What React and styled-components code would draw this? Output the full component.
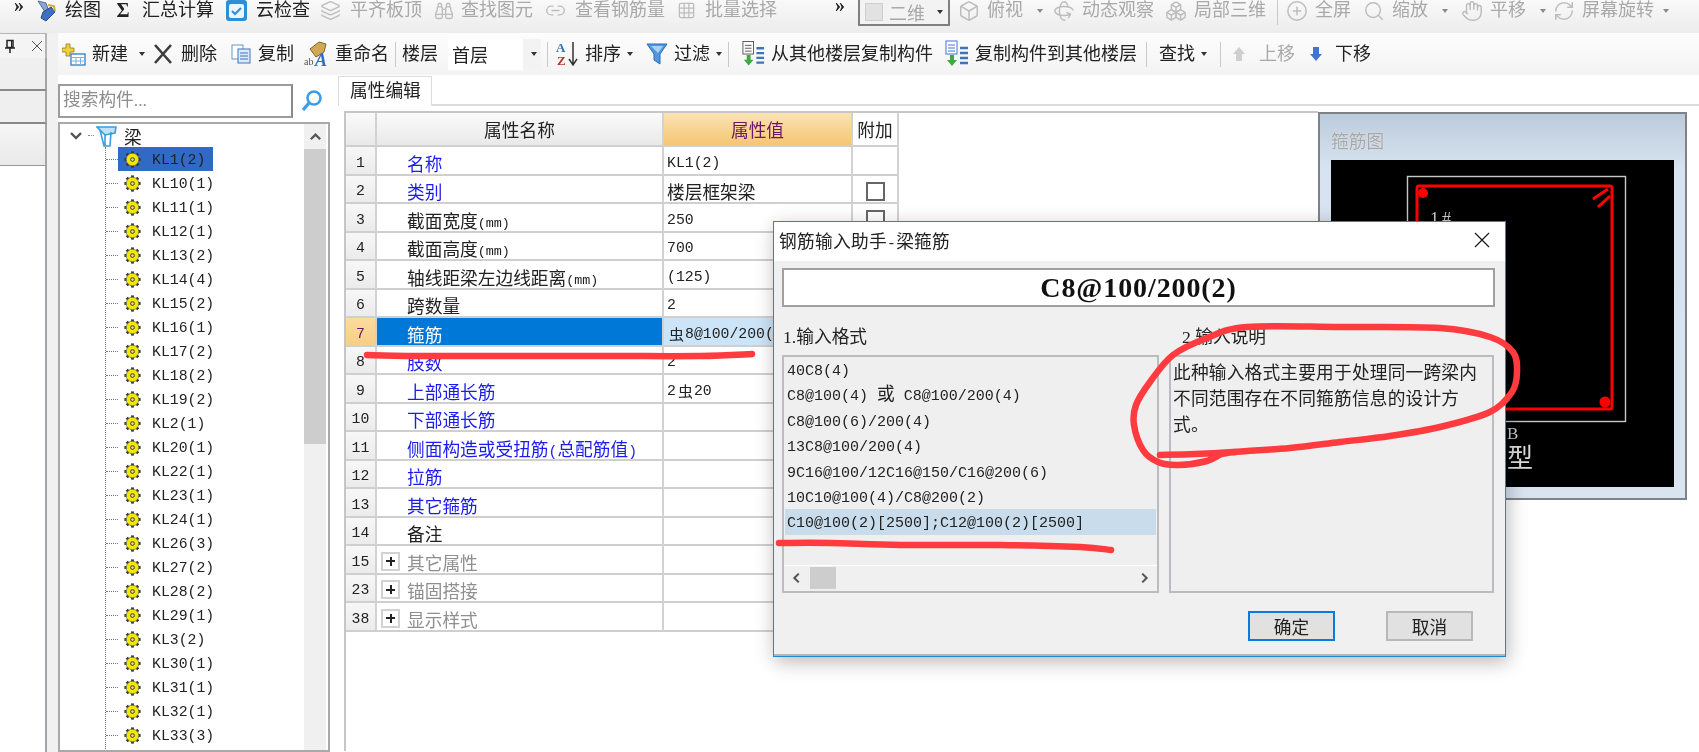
import React from 'react'
import styled, { createGlobalStyle } from 'styled-components'
import {
  Binoculars,
  Box,
  Boxes,
  CirclePlus,
  Grid3x3,
  Hand,
  Layers,
  Link2,
  RefreshCw,
  Rotate3d,
  Search
} from 'lucide-react'

const GlobalStyle = createGlobalStyle`
  html, body {
    margin: 0;
    padding: 0;
    background: #fff;
  }
  body {
    font-family: 'Liberation Serif', 'Noto Sans CJK SC', serif;
    font-size: 17.7px;
    color: #222;
  }
`

const Page = styled.div`
  position: relative;
  width: 1699px;
  height: 752px;
  overflow: hidden;
  display: flex;
  flex-direction: column;
  background: #fff;
  filter: blur(0.4px);
`

const Mono = styled.span`
  font-family: 'Liberation Mono', 'Noto Sans CJK SC', monospace;
  font-size: 14.8px;
`

const ListMono = styled(Mono)`
  font-size: 15px;
  white-space: pre;
`

/* ---------- toolbars ---------- */

const TopBar = styled.div`
  height: 33px;
  flex: none;
  display: flex;
  align-items: flex-start;
  padding-left: 14px;
  background: linear-gradient(#f9f9f9, #ececec);
`

const SubBar = styled.div`
  height: 42px;
  flex: none;
  display: flex;
  align-items: center;
  padding-left: 4px;
  background: linear-gradient(#fdfdfd, #f3f3f3);
`

const Tool = styled.div`
  flex: none;
  width: ${(p) => p.$adv}px;
  height: 21px;
  display: flex;
  align-items: center;
  gap: ${(p) => p.$gap ?? 7}px;
  white-space: nowrap;
  line-height: 21px;
  font-size: 18px;
  color: ${(p) => (p.$muted ? '#a9a9a9' : '#222')};
`

const IconSlot = styled.span`
  flex: none;
  width: ${(p) => p.$w}px;
  display: flex;
  align-items: center;
  justify-content: center;
  color: #bdbdbd;
`

const Sigma = styled.b`
  font-size: 20px;
  color: #222;
`

const Caret = styled.i`
  flex: none;
  width: 0;
  height: 0;
  margin-left: ${(p) => p.$ml ?? 3}px;
  border-left: 3.5px solid transparent;
  border-right: 3.5px solid transparent;
  border-top: 4.5px solid ${(p) => (p.$muted ? '#8a8a8a' : '#333')};
`

const Sep = styled.span`
  flex: none;
  width: ${(p) => p.$adv}px;
  height: 25px;
  box-sizing: border-box;
  border-left: 1px solid #c9c9c9;
`

const Chevrons = styled.span`
  flex: none;
  width: ${(p) => p.$adv}px;
  font-size: 20px;
  line-height: 11px;
  font-weight: 700;
`

const ViewBox = styled.div`
  flex: none;
  width: 92px;
  height: 26px;
  margin-right: 7px;
  box-sizing: border-box;
  display: flex;
  align-items: center;
  padding-left: 5px;
  border: 2px solid #808080;
  border-top: 0;
  font-size: 18px;
  color: #a9a9a9;
  background: #f3f3f3;
`

const ViewSwatch = styled.span`
  width: 18px;
  height: 18px;
  margin-right: 6px;
  background: #e2e2e2;
  border: 1px solid #cfcfcf;
  box-sizing: border-box;
`

const FloorSelect = styled.div`
  flex: none;
  width: 93px;
  height: 31px;
  margin-right: 6px;
  display: flex;
  align-items: center;
  font-size: 18px;
  background: linear-gradient(90deg, #fff 0 75px, #f3f3f3 75px);
  padding-left: 4px;
  box-sizing: border-box;
`

/* ---------- left stub ---------- */

const Main = styled.div`
  flex: 1;
  min-height: 0;
  display: flex;
`

const Stub = styled.div`
  flex: none;
  width: 58px;
  display: flex;
  flex-direction: column;
  background: #f1f1f1;
`

const StubTab = styled.div`
  height: 25px;
  width: 47px;
  flex: none;
  box-sizing: border-box;
  display: flex;
  align-items: center;
  gap: 15px;
  padding-left: 4px;
  border-top: 1px solid #b5b5b5;
  border-right: 2px solid #b5b5b5;
  background: #f4f4f4;
`

const StubBlock = styled.div`
  width: 47px;
  flex: none;
  height: ${(p) => p.$h}px;
  box-sizing: border-box;
  border-right: 2px solid #a5a5a5;
  border-bottom: ${(p) => (p.$line ? '2px solid #8a8a8a' : '0')};
  background: ${(p) => (p.$fade ? 'linear-gradient(#f6f6f6, #e9e9e9)' : '#efefef')};
`

const StubSheet = styled.div`
  flex: 1;
  width: 47px;
  box-sizing: border-box;
  background: #fff;
  border-top: 1px solid #999;
  border-right: 2px solid #a0a6ac;
`

const Workspace = styled.div`
  flex: 1;
  min-width: 0;
  display: flex;
  flex-direction: column;
`

const Body = styled.div`
  flex: 1;
  min-height: 0;
  display: flex;
`

/* ---------- component tree ---------- */

const Side = styled.aside`
  flex: none;
  width: 272px;
  box-sizing: border-box;
  padding-top: 9px;
  display: flex;
  flex-direction: column;
  gap: 4px;
`

const SearchRow = styled.div`
  flex: none;
  height: 34px;
  display: flex;
  align-items: center;
`

const SearchInput = styled.div`
  width: 235px;
  height: 34px;
  box-sizing: border-box;
  padding-left: 3px;
  border: 2px solid #9c9c9c;
  border-right-color: #8a8a8a;
  line-height: 28px;
  color: #8d8d8d;
  background: #fff;
`

const SearchButton = styled.div`
  flex: 1;
  display: flex;
  justify-content: center;
  color: #3f9de8;
`

const Tree = styled.div`
  flex: 1;
  min-height: 0;
  display: flex;
  box-sizing: border-box;
  overflow: hidden;
  border: 2px solid #a9a9a9;
  background: #fff;
`

const TreeBody = styled.div`
  flex: 1;
  min-width: 0;
`

const RootRow = styled.div`
  height: 23px;
  display: flex;
  align-items: center;
  padding-left: 8px;
`

const RootDots = styled.span`
  width: 6px;
  margin: 0 2px 0 4px;
  border-top: 1px dotted #888;
`

const RootLabel = styled.span`
  margin-left: 6px;
`

const Branch = styled.div`
  margin-left: 45px;
  border-left: 1px dotted #777;
`

const BranchRow = styled.div`
  height: 24px;
  display: flex;
  align-items: center;
`

const Dash = styled.span`
  width: 12px;
  flex: none;
  border-top: 1px dotted #777;
`

const Node = styled.div`
  height: 24px;
  display: flex;
  align-items: center;
  gap: 11px;
  padding: 0 8px 0 6px;
  background: ${(p) => (p.$selected ? '#316ac5' : 'transparent')};
`

const NodeName = styled(Mono)`
  padding-top: 1px;
`

const TreeScroll = styled.div`
  flex: none;
  width: 22px;
  margin-right: 2px;
  background: #f0f0f0;
`

const ScrollUp = styled.div`
  height: 25px;
  display: flex;
  align-items: center;
  justify-content: center;
`

const ScrollThumb = styled.div`
  height: 295px;
  background: #cdcdcd;
`

/* ---------- property editor ---------- */

const Editor = styled.section`
  flex: 1;
  min-width: 0;
  margin-left: 8px;
  display: flex;
  flex-direction: column;
`

const TabRow = styled.div`
  flex: none;
  height: 31px;
  display: flex;
  box-sizing: border-box;
  border-bottom: 2px solid #dcdcdc;
`

const Tab = styled.div`
  width: 94px;
  box-sizing: border-box;
  margin-top: 1px;
  height: 30px;
  padding-left: 11px;
  line-height: 28px;
  background: #fff;
  border: 1px solid #dcdcdc;
  border-bottom: 0;
`

const EditorBody = styled.div`
  flex: 1;
  min-height: 0;
  display: flex;
  align-items: flex-start;
  padding: 5px 0 0 6px;
`

const SheetFrame = styled.div`
  flex: none;
  width: 974px;
  height: 640px;
  box-sizing: border-box;
  border-top: 2px solid #c6c6c6;
  border-left: 2px solid #c6c6c6;
`

const Sheet = styled.div`
  width: 553px;
  display: grid;
  grid-template-columns: 31px 287px 189px 46px;
  grid-template-rows: 34px;
  grid-auto-rows: 28.5px;
`

const HeadCell = styled.div`
  display: flex;
  align-items: center;
  justify-content: center;
  box-sizing: border-box;
  border-right: 2px solid #d2d2d2;
  border-bottom: 2px solid #cfcfcf;
  color: ${(p) => (p.$active ? '#6b1667' : '#222')};
  background: ${(p) =>
    p.$active
      ? 'linear-gradient(#fbe3b4, #f5c672)'
      : p.$plain
        ? '#fff'
        : 'linear-gradient(#fafafa, #e9e9e9)'};
`

const NumCell = styled.div`
  display: flex;
  align-items: center;
  justify-content: center;
  box-sizing: border-box;
  padding-top: 5px;
  border-right: 2px solid #d2d2d2;
  border-bottom: 2px solid #cfcfcf;
  color: ${(p) => (p.$active ? '#6b1667' : '#222')};
  background: ${(p) =>
    p.$active ? 'linear-gradient(#fbdb9f, #f7cf85)' : 'linear-gradient(#f7f7f7, #ebebeb)'};
`

const toneColor = { link: '#1c1cf0', plain: '#222', group: '#8f8f8f', on: '#fff' }

const NameCell = styled.div`
  display: flex;
  align-items: center;
  box-sizing: border-box;
  padding-top: 5px;
  padding-left: ${(p) => (p.$group ? 4 : 30)}px;
  gap: 7px;
  border-right: 2px solid #d2d2d2;
  border-bottom: 2px solid #cfcfcf;
  white-space: nowrap;
  color: ${(p) => toneColor[p.$tone]};
  background: ${(p) => (p.$tone === 'on' ? '#0078d7' : '#fff')};
`

const Unit = styled.span`
  font-family: 'Liberation Mono', monospace;
  font-size: 13.4px;
  vertical-align: 1.5px;
`

const ValueCell = styled.div`
  display: flex;
  align-items: center;
  box-sizing: border-box;
  padding: 5px 0 0 3px;
  overflow: hidden;
  white-space: nowrap;
  border-right: 2px solid #d2d2d2;
  border-bottom: 2px solid #cfcfcf;
  background: ${(p) => (p.$active ? '#cce4f7' : '#fff')};
`

const RebarMark = styled.span`
  font-size: 15px;
  margin: 0 1px 0 2px;
`

const ExtraCell = styled.div`
  display: flex;
  align-items: center;
  justify-content: center;
  box-sizing: border-box;
  padding-top: 5px;
  border-right: 2px solid #d2d2d2;
  border-bottom: 2px solid #cfcfcf;
`

const CheckBox = styled.span`
  width: 19px;
  height: 19px;
  box-sizing: border-box;
  border: 2px solid #666;
  background: #fff;
`

const PlusBox = styled.span`
  flex: none;
  position: relative;
  width: 19px;
  height: 19px;
  margin-top: -1px;
  box-sizing: border-box;
  border: 2px solid #d2d2d2;
  &::before,
  &::after {
    content: '';
    position: absolute;
    background: #222;
  }
  &::before {
    left: 3px;
    right: 3px;
    top: 6.5px;
    height: 2px;
  }
  &::after {
    top: 3px;
    bottom: 3px;
    left: 6.5px;
    width: 2px;
  }
`

/* ---------- stirrup preview ---------- */

const Preview = styled.div`
  flex: none;
  width: 369px;
  height: 388px;
  margin-top: 1px;
  box-sizing: border-box;
  display: flex;
  flex-direction: column;
  padding: 0 11px 11px;
  border: 2px solid #7f8386;
  background: linear-gradient(#bccbdb, #d6e3f0 14%, #d9e4f0);
`

const PreviewTitle = styled.div`
  height: 46px;
  flex: none;
  line-height: 56px;
  color: #a6a6a6;
  text-shadow: 0 0 1px #fff;
`

const PreviewCanvas = styled.svg`
  flex: 1;
  min-height: 0;
  display: block;
  background: #000;
`

/* ---------- dialog ---------- */

const Dialog = styled.div`
  position: absolute;
  left: 773px;
  top: 221px;
  width: 733px;
  height: 436px;
  box-sizing: border-box;
  display: flex;
  flex-direction: column;
  border: 1px solid #1f87d8;
  background: #f0f0f0;
  box-shadow: 2px 5px 18px rgba(0, 0, 0, 0.28);
`

const DialogTitle = styled.div`
  flex: none;
  height: 39px;
  box-sizing: border-box;
  display: flex;
  align-items: center;
  justify-content: space-between;
  padding: 0 15px 3px 5px;
  letter-spacing: 0.3px;
  background: #fff;
`

const DialogBody = styled.div`
  flex: 1;
  min-height: 0;
  display: flex;
  flex-direction: column;
  padding: 7px 10px 14px 8px;
  border-bottom: 2px solid #b5b5b5;
`

const Formula = styled.div`
  flex: none;
  height: 39px;
  box-sizing: border-box;
  border: 2px solid #a0a0a0;
  background: #fff;
  display: flex;
  align-items: center;
  justify-content: center;
  font-size: 28px;
  font-weight: 700;
  letter-spacing: 0.9px;
  color: #111;
`

const Columns = styled.div`
  flex: none;
  margin-top: 21px;
  display: grid;
  grid-template-columns: 377px 325px;
  column-gap: 10px;
`

const ColumnLabel = styled.div`
  height: 27px;
  line-height: 19px;
  padding-left: ${(p) => p.$inset}px;
`

const ListBox = styled.div`
  height: 238px;
  box-sizing: border-box;
  display: flex;
  flex-direction: column;
  border: 2px solid #bcbcc0;
  background: #efefef;
`

const FormatList = styled.div`
  flex: 1;
  padding-left: 1px;
`

const FormatRow = styled.div`
  height: 25.4px;
  line-height: 25.4px;
  margin-right: 1px;
  padding-left: 2px;
  white-space: nowrap;
  background: ${(p) => (p.$selected ? '#c9dcec' : 'transparent')};
`

const HScroll = styled.div`
  flex: none;
  height: 24px;
  margin-bottom: 1px;
  display: flex;
  align-items: center;
  border-top: 1px solid #fff;
  background: #f0f0f0;
`

const HArrow = styled.span`
  flex: none;
  width: 26px;
  display: flex;
  justify-content: center;
`

const HThumb = styled.span`
  flex: none;
  width: 26px;
  height: 22px;
  background: #cdcdcd;
`

const HSpacer = styled.span`
  flex: 1;
`

const DescBox = styled(ListBox)`
  padding: 3px 0 0 2px;
  line-height: 26px;
  letter-spacing: 0.2px;
`

const Actions = styled.div`
  flex: none;
  margin-top: 18px;
  display: flex;
  gap: 51px;
  padding-left: 466px;
`

const Button = styled.div`
  width: 87px;
  height: 30px;
  box-sizing: border-box;
  display: flex;
  align-items: center;
  justify-content: center;
  background: #e1e1e1;
  border: 2px solid ${(p) => (p.$primary ? '#0a7bdc' : '#b8b8b8')};
`

const Scribble = styled.svg`
  position: absolute;
  left: 0;
  top: 0;
  pointer-events: none;
`

/* ---------- drawn icons ---------- */

const PinIcon = () => (
  <svg width="12" height="15" viewBox="0 0 12 15" fill="none" stroke="#222" strokeWidth="1.5">
    <path d="M3 1.5h6v7H3zM1 9h10M6 9v5" />
    <path d="M7.5 2v6" strokeWidth="1" />
  </svg>
)

const TabClose = () => (
  <svg width="12" height="12" viewBox="0 0 12 12" stroke="#444" strokeWidth="0.9">
    <path d="M1 1l10 10M11 1L1 11" />
  </svg>
)

const BeamIcon = () => (
  <svg width="22" height="24" viewBox="0 0 22 24" fill="none" stroke="#3b9ddc" strokeWidth="1.6">
    <path d="M1 3h19l-1 6-10 2z" fill="#bfe2f5" />
    <path d="M4 6l4 16h6l1-14M9 11v11" />
  </svg>
)

const Gear = () => {
  const teeth = [0, 45, 90, 135]
  return (
    <svg width="17" height="17" viewBox="0 0 17 17" style={{ flex: 'none' }}>
      {teeth.map((a) => (
        <rect key={a} x="7.1" y="0.4" width="2.8" height="16.2" fill="#333" transform={`rotate(${a} 8.5 8.5)`} />
      ))}
      <circle cx="8.5" cy="8.5" r="6.3" fill="#f5e800" stroke="#555" strokeWidth="0.6" />
      <circle cx="8.5" cy="8.5" r="1.9" fill="#d9d27a" stroke="#444" strokeWidth="1" />
    </svg>
  )
}

const PencilIcon = () => (
  <svg width="22" height="24" viewBox="0 0 22 24">
    <path d="M3 2l8 2 2 6-3 3z" fill="#8aa7cf" stroke="#4d6ea5" />
    <path d="M8 13l8-5 4 5-9 9-5-3z" fill="#3f6fc0" stroke="#27508f" />
    <path d="M13 6l6 1 1 5" fill="none" stroke="#d8a93a" strokeWidth="2" />
  </svg>
)

const CloudIcon = () => (
  <svg width="23" height="23" viewBox="0 0 23 23">
    <rect x="1" y="1" width="21" height="21" rx="3" fill="#2d8fd8" />
    <rect x="4" y="5" width="15" height="14" rx="2" fill="#eaf5fd" />
    <path d="M7 12l3 3 6-6" fill="none" stroke="#2d8fd8" strokeWidth="2" />
  </svg>
)

const NewIcon = () => (
  <svg width="25" height="26" viewBox="0 0 25 26">
    <path d="M4 3h4v4h4v4H8v4H4v-4H0V7h4z" fill="#f2d23c" stroke="#8f7a1f" strokeWidth="0.8" />
    <rect x="9" y="13" width="14" height="11" fill="#fff" stroke="#3f86c8" strokeWidth="1.4" />
    <path d="M9 16.5h14M14 16.5V24M18.5 16.5V24M9 20h14" stroke="#7fb2de" strokeWidth="1" />
  </svg>
)

const CrossIcon = () => (
  <svg width="20" height="22" viewBox="0 0 20 22" fill="none" stroke="#3b3b3b" strokeWidth="2.6">
    <path d="M2 2l16 18M18 2L2 20" />
  </svg>
)

const CopyIcon = () => (
  <svg width="22" height="22" viewBox="0 0 22 22">
    <rect x="2" y="2" width="11" height="14" fill="#fff" stroke="#6a93c6" />
    <rect x="8" y="6" width="12" height="14" fill="#dce9f7" stroke="#3f74b8" />
    <path d="M10 10h8M10 13h8M10 16h8" stroke="#3f74b8" />
  </svg>
)

const RenameIcon = () => (
  <svg width="25" height="27" viewBox="0 0 25 27">
    <path d="M6 8l9-7 7 2-2 8-8 5z" fill="#cfa956" stroke="#7d6530" />
    <text x="0" y="24" fontSize="10" fill="#555" fontFamily="Liberation Serif">ab</text>
    <text x="11" y="25" fontSize="18" fontStyle="italic" fontWeight="700" fill="#2f6fc0" fontFamily="Liberation Serif">A</text>
  </svg>
)

const SortIcon = () => (
  <svg width="25" height="28" viewBox="0 0 25 28" fontFamily="Liberation Serif" fontWeight="700" fontSize="13">
    <text x="1" y="12" fill="#2d6fc2">A</text>
    <text x="2" y="25" fill="#b03a2e">Z</text>
    <path d="M18 2v22M14 19l4 6 4-6" fill="none" stroke="#333" strokeWidth="1.5" />
  </svg>
)

const FunnelIcon = () => (
  <svg width="22" height="24" viewBox="0 0 22 24">
    <path d="M1 2h20l-7 10v10l-6-4v-6z" fill="#4f97e0" stroke="#2a6cb4" />
    <path d="M5 4h12l-5 7" fill="#a8d0f5" />
  </svg>
)

const FloorCopyIcon = ({ tint = '#5a5a5a' }) => (
  <svg width="26" height="28" viewBox="0 0 26 28">
    <rect x="2" y="1" width="11" height="13" fill="#fff" stroke={tint} />
    <path d="M4 5h7M4 8h7M4 11h7" stroke={tint} />
    <path d="M6 15h4v5h3l-5 6-5-6h3z" fill="#3dab3d" />
    <path d="M16 8h8M16 13h8M16 18h8M16 23h8" stroke="#3f74b8" strokeWidth="2.4" />
  </svg>
)

const ArrowIcon = ({ down }) => (
  <svg width="14" height="16" viewBox="0 0 14 16" style={down ? undefined : { transform: 'scaleY(-1)' }}>
    <path d="M4 1h6v7h3l-6 7-6-7h3z" fill={down ? '#3f74d6' : '#cfcfcf'} />
  </svg>
)

const SearchGlass = () => (
  <svg width="22" height="24" viewBox="0 0 22 24" fill="none" stroke="currentColor">
    <circle cx="13" cy="9" r="6.5" strokeWidth="2.6" />
    <path d="M8 14l-6 7" strokeWidth="3.4" />
  </svg>
)

const Chev = ({ dir = 'down', size = 16 }) => {
  const paths = {
    down: 'M3 5l5 5 5-5',
    up: 'M3 11l5-5 5 5',
    left: 'M10 3L5 8l5 5',
    right: 'M6 3l5 5-5 5'
  }
  return (
    <svg width={size} height={size} viewBox="0 0 16 16" fill="none" stroke="#555" strokeWidth="2.4">
      <path d={paths[dir]} />
    </svg>
  )
}

const CloseX = () => (
  <svg width="16" height="16" viewBox="0 0 16 16" stroke="#111" strokeWidth="1.1">
    <path d="M1 1l14 14M15 1L1 15" />
  </svg>
)

/* ---------- data ---------- */

const grayIcon = (Icon, size = 21) => <Icon size={size} strokeWidth={1.6} />

const viewTools = [
  { label: '俯视', icon: Box, adv: 95, caret: true },
  { label: '动态观察', icon: Rotate3d, adv: 112 },
  { label: '局部三维', icon: Boxes, adv: 113 }
]

const zoomTools = [
  { label: '全屏', icon: CirclePlus, adv: 77 },
  { label: '缩放', icon: Search, adv: 98, caret: true },
  { label: '平移', icon: Hand, adv: 92, caret: true },
  { label: '屏幕旋转', icon: RefreshCw, adv: 120, caret: true }
]

const beams = [
  'KL1(2)', 'KL10(1)', 'KL11(1)', 'KL12(1)', 'KL13(2)', 'KL14(4)', 'KL15(2)', 'KL16(1)',
  'KL17(2)', 'KL18(2)', 'KL19(2)', 'KL2(1)', 'KL20(1)', 'KL22(1)', 'KL23(1)', 'KL24(1)',
  'KL26(3)', 'KL27(2)', 'KL28(2)', 'KL29(1)', 'KL3(2)', 'KL30(1)', 'KL31(1)', 'KL32(1)',
  'KL33(3)', 'KL34(1)'
]

const props = [
  { n: 1, label: '名称', tone: 'link', value: <Mono>KL1(2)</Mono> },
  { n: 2, label: '类别', tone: 'link', value: '楼层框架梁', check: true },
  { n: 3, label: '截面宽度', unit: '(mm)', tone: 'plain', value: <Mono>250</Mono>, check: true },
  { n: 4, label: '截面高度', unit: '(mm)', tone: 'plain', value: <Mono>700</Mono> },
  { n: 5, label: '轴线距梁左边线距离', unit: '(mm)', tone: 'plain', value: <Mono>(125)</Mono> },
  { n: 6, label: '跨数量', tone: 'plain', value: <Mono>2</Mono> },
  {
    n: 7,
    label: '箍筋',
    tone: 'on',
    active: true,
    value: (
      <>
        <RebarMark>虫</RebarMark>
        <Mono>8@100/200(2)</Mono>
      </>
    )
  },
  { n: 8, label: '肢数', tone: 'link', value: <Mono>2</Mono> },
  {
    n: 9,
    label: '上部通长筋',
    tone: 'link',
    value: (
      <>
        <Mono>2</Mono>
        <RebarMark>虫</RebarMark>
        <Mono>20</Mono>
      </>
    )
  },
  { n: 10, label: '下部通长筋', tone: 'link' },
  {
    n: 11,
    label: (
      <>
        侧面构造或受扭筋<Mono>(</Mono>总配筋值<Mono>)</Mono>
      </>
    ),
    tone: 'link'
  },
  { n: 12, label: '拉筋', tone: 'link' },
  { n: 13, label: '其它箍筋', tone: 'link' },
  { n: 14, label: '备注', tone: 'plain' },
  { n: 15, label: '其它属性', tone: 'group', group: true },
  { n: 23, label: '锚固搭接', tone: 'group', group: true },
  { n: 38, label: '显示样式', tone: 'group', group: true }
]

const formats = [
  <ListMono>40C8(4)</ListMono>,
  <>
    <ListMono>C8@100(4) </ListMono>或<ListMono> C8@100/200(4)</ListMono>
  </>,
  <ListMono>C8@100(6)/200(4)</ListMono>,
  <ListMono>13C8@100/200(4)</ListMono>,
  <ListMono>9C16@100/12C16@150/C16@200(6)</ListMono>,
  <ListMono>10C10@100(4)/C8@200(2)</ListMono>,
  <ListMono>C10@100(2)[2500];C12@100(2)[2500]</ListMono>
]

// catmull-rom through the hand traced points of the marker strokes
const smooth = (pts) => {
  let d = `M${pts[0][0]} ${pts[0][1]}`
  for (let i = 0; i < pts.length - 1; i++) {
    const p0 = pts[i - 1] || pts[i]
    const p1 = pts[i]
    const p2 = pts[i + 1]
    const p3 = pts[i + 2] || p2
    const c1x = p1[0] + (p2[0] - p0[0]) / 6
    const c1y = p1[1] + (p2[1] - p0[1]) / 6
    const c2x = p2[0] - (p3[0] - p1[0]) / 6
    const c2y = p2[1] - (p3[1] - p1[1]) / 6
    d += ` C${c1x} ${c1y} ${c2x} ${c2y} ${p2[0]} ${p2[1]}`
  }
  return d
}

const loop = [
  [1160, 455], [1195, 454], [1233, 452], [1290, 448], [1340, 442], [1390, 436], [1440, 427],
  [1490, 412], [1512, 392], [1517, 372], [1513, 352], [1490, 337], [1440, 328], [1340, 327],
  [1247, 327], [1207, 338], [1173, 355], [1150, 382], [1136, 405], [1134, 425], [1143, 450],
  [1158, 462], [1178, 465], [1207, 461], [1222, 454], [1236, 452]
]

const rowLine = [[367, 355], [420, 356], [600, 356], [700, 356], [752, 354]]

const listLine = [[779, 543], [830, 543], [900, 545], [1000, 545], [1080, 547], [1111, 550]]

/* ---------- page ---------- */

const ToolItem = ({ icon, w, label, adv, gap, muted, caret, caretGap }) => (
  <Tool $adv={adv} $gap={gap} $muted={muted}>
    <IconSlot $w={w}>{icon}</IconSlot>
    {label}
    {caret && <Caret $ml={caretGap} $muted={muted} />}
  </Tool>
)

const App = () => (
  <Page>
    <GlobalStyle />

    <TopBar>
      <Chevrons $adv={21}>»</Chevrons>
      <ToolItem icon={<PencilIcon />} w={22} gap={8} adv={80} label="绘图" />
      <ToolItem icon={<Sigma>Σ</Sigma>} w={16} gap={11} adv={110} label="汇总计算" />
      <ToolItem icon={<CloudIcon />} w={23} gap={8} adv={95} label="云检查" />
      <ToolItem icon={grayIcon(Layers)} w={21} gap={9} adv={114} muted label="平齐板顶" />
      <ToolItem icon={grayIcon(Binoculars, 20)} w={20} gap={7} adv={111} muted label="查找图元" />
      <ToolItem icon={grayIcon(Link2)} w={21} gap={9} adv={132} muted label="查看钢筋量" />
      <ToolItem icon={grayIcon(Grid3x3, 19)} w={19} gap={9} adv={158} muted label="批量选择" />
      <Chevrons $adv={23}>»</Chevrons>
      <ViewBox>
        <ViewSwatch />
        二维
        <Caret $ml={12} />
      </ViewBox>
      {viewTools.map((t) => (
        <ToolItem key={t.label} icon={grayIcon(t.icon, 22)} w={23} adv={t.adv} muted label={t.label} caret={t.caret} caretGap={7} />
      ))}
      <Sep $adv={8} />
      {zoomTools.map((t) => (
        <ToolItem key={t.label} icon={grayIcon(t.icon, 22)} w={23} adv={t.adv} muted label={t.label} caret={t.caret} caretGap={t.label === '屏幕旋转' ? 2 : 7} />
      ))}
    </TopBar>

    <Main>
      <Stub>
        <StubTab>
          <PinIcon />
          <TabClose />
        </StubTab>
        <StubBlock $h={33} $line />
        <StubBlock $h={33} $line />
        <StubBlock $h={41} $fade />
        <StubSheet />
      </Stub>

      <Workspace>
        <SubBar>
          <ToolItem icon={<NewIcon />} w={25} gap={5} adv={91} label="新建" caret caretGap={6} />
          <ToolItem icon={<CrossIcon />} w={20} gap={8} adv={77} label="删除" />
          <ToolItem icon={<CopyIcon />} w={22} gap={6} adv={74} label="复制" />
          <ToolItem icon={<RenameIcon />} w={25} gap={6} adv={91} label="重命名" />
          <Sep $adv={7} />
          <Tool $adv={46}>楼层</Tool>
          <FloorSelect>
            首层
            <Caret $ml={43} />
          </FloorSelect>
          <Sep $adv={8} />
          <ToolItem icon={<SortIcon />} w={25} gap={5} adv={91} label="排序" caret caretGap={1} />
          <ToolItem icon={<FunnelIcon />} w={22} gap={6} adv={82} label="过滤" caret caretGap={0} />
          <Sep $adv={13} />
          <ToolItem icon={<FloorCopyIcon />} w={25} gap={5} adv={202} label="从其他楼层复制构件" />
          <ToolItem icon={<FloorCopyIcon tint="#3f74d6" />} w={27} gap={5} adv={203} label="复制构件到其他楼层" />
          <Sep $adv={13} />
          <Tool $adv={61} $gap={0}>
            查找
            <Caret $ml={6} />
          </Tool>
          <Sep $adv={12} />
          <ToolItem icon={<ArrowIcon />} w={14} gap={13} adv={77} muted label="上移" />
          <ToolItem icon={<ArrowIcon down />} w={14} gap={12} adv={80} label="下移" />
        </SubBar>

        <Body>
          <Side>
            <SearchRow>
              <SearchInput>搜索构件...</SearchInput>
              <SearchButton>
                <SearchGlass />
              </SearchButton>
            </SearchRow>
            <Tree>
              <TreeBody>
                <RootRow>
                  <Chev />
                  <RootDots />
                  <BeamIcon />
                  <RootLabel>梁</RootLabel>
                </RootRow>
                <Branch>
                  {beams.map((name, i) => (
                    <BranchRow key={name}>
                      <Dash />
                      <Node $selected={i === 0}>
                        <Gear />
                        <NodeName>{name}</NodeName>
                      </Node>
                    </BranchRow>
                  ))}
                </Branch>
              </TreeBody>
              <TreeScroll>
                <ScrollUp>
                  <Chev dir="up" size={15} />
                </ScrollUp>
                <ScrollThumb />
              </TreeScroll>
            </Tree>
          </Side>

          <Editor>
            <TabRow>
              <Tab>属性编辑</Tab>
            </TabRow>
            <EditorBody>
              <SheetFrame>
                <Sheet>
                  <HeadCell />
                  <HeadCell>属性名称</HeadCell>
                  <HeadCell $active>属性值</HeadCell>
                  <HeadCell $plain>附加</HeadCell>
                  {props.map((row) => (
                    <React.Fragment key={row.n}>
                      <NumCell $active={row.active}>
                        <Mono>{row.n}</Mono>
                      </NumCell>
                      <NameCell $tone={row.tone} $group={row.group}>
                        {row.group && <PlusBox />}
                        <span>
                          {row.label}
                          {row.unit && <Unit>{row.unit}</Unit>}
                        </span>
                      </NameCell>
                      <ValueCell $active={row.active}>{row.value}</ValueCell>
                      <ExtraCell>{row.check && <CheckBox />}</ExtraCell>
                    </React.Fragment>
                  ))}
                </Sheet>
              </SheetFrame>

              <Preview>
                <PreviewTitle>箍筋图</PreviewTitle>
                <PreviewCanvas viewBox="0 0 343 327" fontFamily="Liberation Serif, Noto Sans CJK SC, serif">
                  <rect x="76.5" y="16.5" width="218" height="245" fill="none" stroke="#c8c8c8" strokeWidth="1.4" />
                  <rect x="86" y="26" width="195" height="223" rx="2" fill="none" stroke="#f00" strokeWidth="3" />
                  <circle cx="92" cy="33" r="5" fill="#f00" />
                  <circle cx="274" cy="242" r="5.5" fill="#f00" />
                  <path d="M262 39l15-10M267 47l12-11" stroke="#f00" strokeWidth="3" fill="none" />
                  <text x="99" y="65" fontSize="18" letterSpacing="3" fill="#ccc">1#</text>
                  <text x="176" y="279" fontSize="17" fill="#ccc">B</text>
                  <text x="176" y="307" fontSize="26" fill="#ddd">型</text>
                </PreviewCanvas>
              </Preview>
            </EditorBody>
          </Editor>
        </Body>
      </Workspace>
    </Main>

    <Dialog>
      <DialogTitle>
        <span>
          钢筋输入助手<Mono>-</Mono>梁箍筋
        </span>
        <CloseX />
      </DialogTitle>
      <DialogBody>
        <Formula>C8@100/200(2)</Formula>
        <Columns>
          <ColumnLabel $inset={1}>1.输入格式</ColumnLabel>
          <ColumnLabel $inset={13}>2.输入说明</ColumnLabel>
          <ListBox>
            <FormatList>
              {formats.map((f, i) => (
                <FormatRow key={i} $selected={i === formats.length - 1}>
                  {f}
                </FormatRow>
              ))}
            </FormatList>
            <HScroll>
              <HArrow>
                <Chev dir="left" size={14} />
              </HArrow>
              <HThumb />
              <HSpacer />
              <HArrow>
                <Chev dir="right" size={14} />
              </HArrow>
            </HScroll>
          </ListBox>
          <DescBox>
            <div>此种输入格式主要用于处理同一跨梁内</div>
            <div>不同范围存在不同箍筋信息的设计方</div>
            <div>式。</div>
          </DescBox>
        </Columns>
        <Actions>
          <Button $primary>确定</Button>
          <Button>取消</Button>
        </Actions>
      </DialogBody>
    </Dialog>

    <Scribble width="1699" height="752" fill="none" stroke="#ff3b3f" strokeWidth="6.5" strokeLinecap="round" strokeLinejoin="round">
      <path d={smooth(rowLine)} />
      <path d={smooth(listLine)} />
      <path d={smooth(loop)} />
    </Scribble>
  </Page>
)

export default App
